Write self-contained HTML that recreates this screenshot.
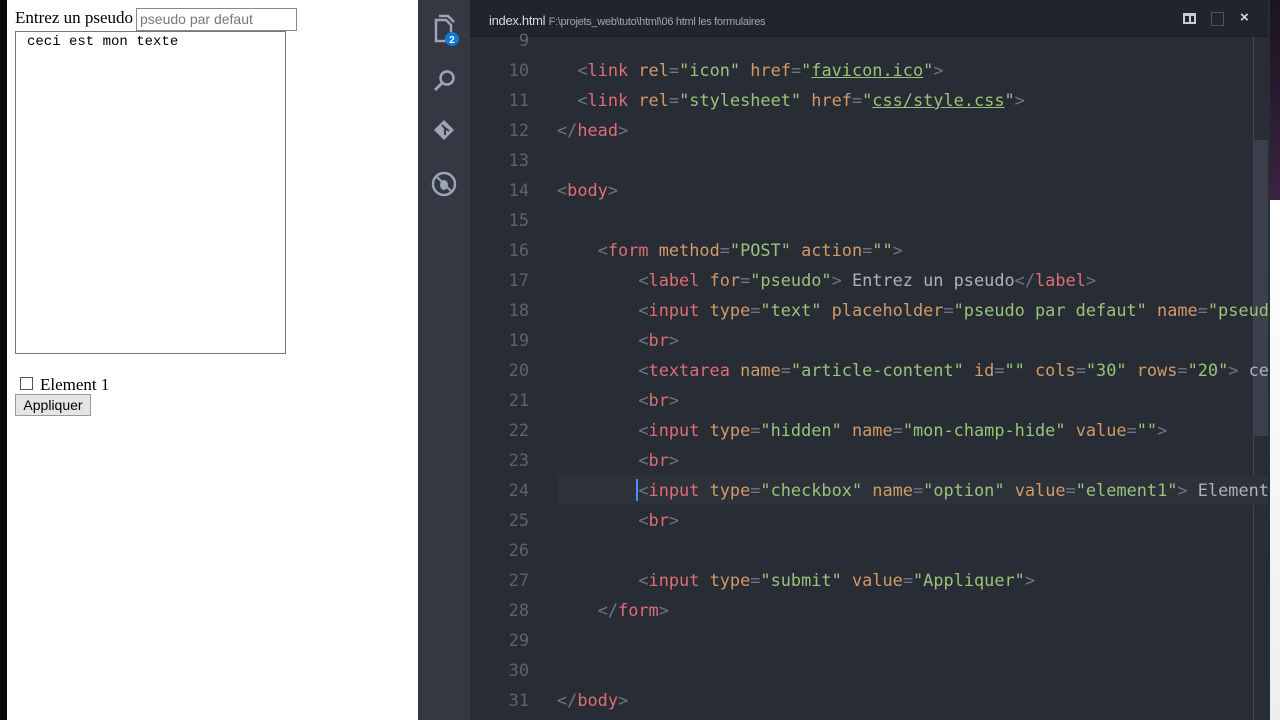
<!DOCTYPE html>
<html><head><meta charset="utf-8"><style>
body{margin:0;width:1280px;height:720px;overflow:hidden;position:relative;background:#fff;font-family:"Liberation Serif",serif}
.abs{position:absolute}
#blk{left:0;top:0;width:7px;height:720px;background:#0a0a0a}
#act{left:418px;top:0;width:52px;height:720px;background:#333842}
#ed{left:470px;top:0;width:800px;height:720px;background:#282c34}
#rt{left:1270px;top:0;width:10px;height:720px;background:linear-gradient(#1a1420 0,#3a2340 200px,#fff 200px,#eee 720px)}
#tb{left:470px;top:0;width:800px;height:36px;background:#21252b;border-bottom:1px solid #181a1f}
.ln{position:absolute;left:470px;width:59px;text-align:right;color:#5c6370;font:16.9px "DejaVu Sans Mono",monospace}
.cd{position:absolute;left:557px;white-space:pre;font:16.9px "DejaVu Sans Mono",monospace;color:#abb2bf}
.t{color:#e06c75}.a{color:#d19a66}.s{color:#98c379}.p{color:#6f7683}.u{text-decoration:underline}
</style></head><body>
<div class="abs" id="blk"></div>
<div class="abs" style="left:15px;top:8px;font-size:17px;color:#000">Entrez un pseudo</div>
<div class="abs" style="left:136px;top:8px;border:1px solid #888;font:14px 'Liberation Sans',sans-serif;color:#777;line-height:21px;padding-left:3px;box-sizing:border-box;width:161px;height:23px">pseudo par defaut</div>
<div class="abs" style="left:15px;top:31px;width:271px;height:323px;border:1px solid #777;box-sizing:border-box;font:14px 'Liberation Mono',monospace;color:#000;padding:2px 0 0 11px">ceci est mon texte</div>
<div class="abs" style="left:20px;top:377px;width:11px;height:11px;border:1px solid #555"></div>
<div class="abs" style="left:40px;top:375px;font-size:17px">Element 1</div>
<div class="abs" style="left:15px;top:394px;width:76px;height:22px;border:1px solid #999;background:#e5e5e5;box-sizing:border-box;font:14px 'Liberation Sans',sans-serif;text-align:center;line-height:20px">Appliquer</div>

<div class="abs" id="act"></div>
<svg class="abs" style="left:430px;top:12px" width="30" height="190" viewBox="0 0 30 190">
<g fill="none" stroke="#9da5b4" stroke-width="2.5"><path d="M6 8h10l5 5v16H6z"/><path d="M9 4h9l6 6"/></g>
<circle cx="22" cy="27" r="7" fill="#0e7ad3"/><text x="22" y="31" fill="#fff" font-size="10" font-family="Liberation Sans" text-anchor="middle" font-weight="bold">2</text>
<circle cx="17" cy="66" r="6.5" fill="none" stroke="#9da5b4" stroke-width="2.5"/><path d="M12 71l-7 7" stroke="#9da5b4" stroke-width="3"/>
<path d="M14 108l10 10-10 10-10-10z" fill="#9da5b4"/><path d="M12 113l3 3v7M15 116l4 3" stroke="#333842" stroke-width="2" fill="none"/>
<circle cx="14" cy="172" r="11" fill="none" stroke="#9da5b4" stroke-width="2.5"/><ellipse cx="14" cy="173" rx="4" ry="5" fill="#9da5b4"/><path d="M6 164l16 16" stroke="#9da5b4" stroke-width="2"/>
</svg>
<div class="abs" id="ed"></div>
<div class="abs" id="rt"></div>
<div class="abs" id="tb"></div>
<div class="abs" style="left:489px;top:13px;font:13px 'Liberation Sans',sans-serif;color:#d7dae0;letter-spacing:-0.3px">index.html <span style="font-size:11px;color:#9da5b4">F:\projets_web\tuto\html\06 html les formulaires</span></div>
<div class="abs" style="left:1183px;top:13px;width:13px;height:11px;border:2px solid #c8ccd4;border-top-width:3px;box-sizing:border-box"></div>
<div class="abs" style="left:1189px;top:13px;width:2px;height:11px;background:#c8ccd4"></div>
<div class="abs" style="left:1211px;top:12px;width:11px;height:12px;border:1px solid #4b5260"></div>
<div class="abs" style="left:1240px;top:9px;font:bold 15px 'Liberation Sans',sans-serif;color:#d7dae0">×</div>
<div class="abs" style="left:1253px;top:36px;width:1px;height:684px;background:#3e4451"></div>
<div class="abs" style="left:1254px;top:140px;width:14px;height:296px;background:#3a3f4b"></div>
<div class="abs" style="left:557px;top:475px;width:713px;height:30px;background:#2c313a"></div>
<div class="abs" style="left:636px;top:479px;width:2px;height:22px;background:#528bff"></div>

<div class="ln" style="top:30px">9</div>
<div class="ln" style="top:60px">10</div><div class="cd" style="top:60px">  <span class="p">&lt;</span><span class="t">link</span> <span class="a">rel</span><span class="p">=</span><span class="s">"icon"</span> <span class="a">href</span><span class="p">=</span><span class="s">"<span class="u">favicon.ico</span>"</span><span class="p">&gt;</span></div>
<div class="ln" style="top:90px">11</div><div class="cd" style="top:90px">  <span class="p">&lt;</span><span class="t">link</span> <span class="a">rel</span><span class="p">=</span><span class="s">"stylesheet"</span> <span class="a">href</span><span class="p">=</span><span class="s">"<span class="u">css/style.css</span>"</span><span class="p">&gt;</span></div>
<div class="ln" style="top:120px">12</div><div class="cd" style="top:120px"><span class="p">&lt;/</span><span class="t">head</span><span class="p">&gt;</span></div>
<div class="ln" style="top:150px">13</div>
<div class="ln" style="top:180px">14</div><div class="cd" style="top:180px"><span class="p">&lt;</span><span class="t">body</span><span class="p">&gt;</span></div>
<div class="ln" style="top:210px">15</div>
<div class="ln" style="top:240px">16</div><div class="cd" style="top:240px">    <span class="p">&lt;</span><span class="t">form</span> <span class="a">method</span><span class="p">=</span><span class="s">"POST"</span> <span class="a">action</span><span class="p">=</span><span class="s">""</span><span class="p">&gt;</span></div>
<div class="ln" style="top:270px">17</div><div class="cd" style="top:270px">        <span class="p">&lt;</span><span class="t">label</span> <span class="a">for</span><span class="p">=</span><span class="s">"pseudo"</span><span class="p">&gt;</span> Entrez un pseudo<span class="p">&lt;/</span><span class="t">label</span><span class="p">&gt;</span></div>
<div class="ln" style="top:300px">18</div><div class="cd" style="top:300px">        <span class="p">&lt;</span><span class="t">input</span> <span class="a">type</span><span class="p">=</span><span class="s">"text"</span> <span class="a">placeholder</span><span class="p">=</span><span class="s">"pseudo par defaut"</span> <span class="a">name</span><span class="p">=</span><span class="s">"pseud</span></div>
<div class="ln" style="top:330px">19</div><div class="cd" style="top:330px">        <span class="p">&lt;</span><span class="t">br</span><span class="p">&gt;</span></div>
<div class="ln" style="top:360px">20</div><div class="cd" style="top:360px">        <span class="p">&lt;</span><span class="t">textarea</span> <span class="a">name</span><span class="p">=</span><span class="s">"article-content"</span> <span class="a">id</span><span class="p">=</span><span class="s">""</span> <span class="a">cols</span><span class="p">=</span><span class="s">"30"</span> <span class="a">rows</span><span class="p">=</span><span class="s">"20"</span><span class="p">&gt;</span> ce</div>
<div class="ln" style="top:390px">21</div><div class="cd" style="top:390px">        <span class="p">&lt;</span><span class="t">br</span><span class="p">&gt;</span></div>
<div class="ln" style="top:420px">22</div><div class="cd" style="top:420px">        <span class="p">&lt;</span><span class="t">input</span> <span class="a">type</span><span class="p">=</span><span class="s">"hidden"</span> <span class="a">name</span><span class="p">=</span><span class="s">"mon-champ-hide"</span> <span class="a">value</span><span class="p">=</span><span class="s">""</span><span class="p">&gt;</span></div>
<div class="ln" style="top:450px">23</div><div class="cd" style="top:450px">        <span class="p">&lt;</span><span class="t">br</span><span class="p">&gt;</span></div>
<div class="ln" style="top:480px">24</div><div class="cd" style="top:480px">        <span class="p">&lt;</span><span class="t">input</span> <span class="a">type</span><span class="p">=</span><span class="s">"checkbox"</span> <span class="a">name</span><span class="p">=</span><span class="s">"option"</span> <span class="a">value</span><span class="p">=</span><span class="s">"element1"</span><span class="p">&gt;</span> Element</div>
<div class="ln" style="top:510px">25</div><div class="cd" style="top:510px">        <span class="p">&lt;</span><span class="t">br</span><span class="p">&gt;</span></div>
<div class="ln" style="top:540px">26</div>
<div class="ln" style="top:570px">27</div><div class="cd" style="top:570px">        <span class="p">&lt;</span><span class="t">input</span> <span class="a">type</span><span class="p">=</span><span class="s">"submit"</span> <span class="a">value</span><span class="p">=</span><span class="s">"Appliquer"</span><span class="p">&gt;</span></div>
<div class="ln" style="top:600px">28</div><div class="cd" style="top:600px">    <span class="p">&lt;/</span><span class="t">form</span><span class="p">&gt;</span></div>
<div class="ln" style="top:630px">29</div>
<div class="ln" style="top:660px">30</div>
<div class="ln" style="top:690px">31</div><div class="cd" style="top:690px"><span class="p">&lt;/</span><span class="t">body</span><span class="p">&gt;</span></div>
<div class="abs" style="left:1268px;top:0;width:2px;height:720px;background:#282c34"></div>
</body></html>
